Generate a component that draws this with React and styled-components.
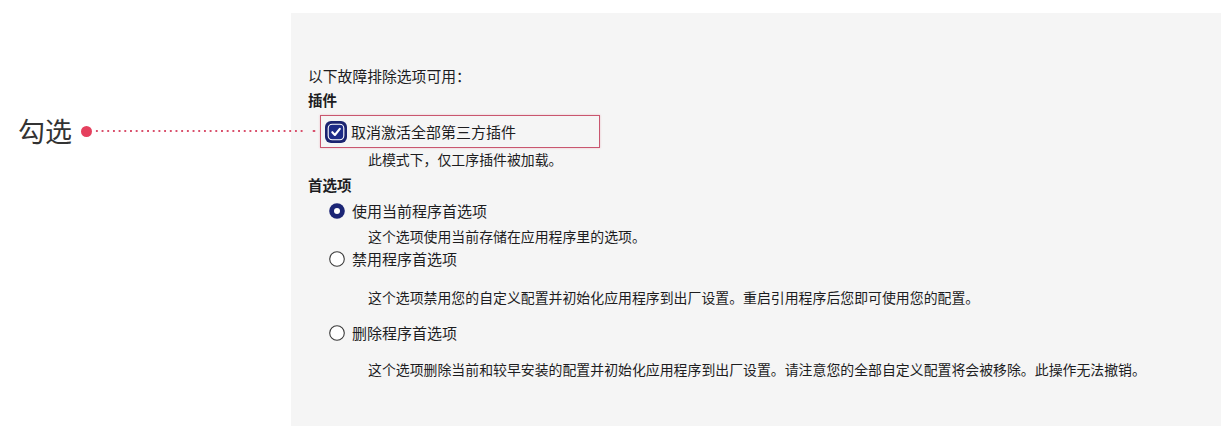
import React from "react";
import styled, { createGlobalStyle } from "styled-components";

const Global = createGlobalStyle`
  html, body { margin: 0; padding: 0; background: #ffffff; }
  body { font-family: "Noto Sans CJK SC", "Noto Sans", sans-serif; color: #1d1d1f; }
`;

const Page = styled.div`
  position: relative;
  width: 1232px;
  height: 433px;
  padding: 13px 0 0 291px;
  box-sizing: border-box;
`;

const Panel = styled.div`
  width: 930px;
  height: 413px;
  background: #f5f5f5;
  box-sizing: border-box;
  padding: 53px 0 0 17px;
  display: flex;
  flex-direction: column;
`;

const Intro = styled.div`
  font-size: 14.8px;
  line-height: 20px;
  height: 20px;
`;

const Heading = styled.div`
  font-size: 14.5px;
  font-weight: 700;
  line-height: 20px;
  height: 20px;
  margin-top: ${(p) => p.$mt}px;
`;

const CheckRow = styled.div`
  margin: 5px 0 0 12px;
  width: 280px;
  height: 33px;
  box-sizing: border-box;
  border: 1.5px solid #c9566f;
  box-shadow: 0 0 2px rgba(220, 80, 110, 0.35);
  display: flex;
  align-items: center;
  gap: 4px;
  padding-left: 4px;
`;

const Label = styled.span`
  font-size: 15px;
  line-height: 20px;
  color: #1d1d1f;
`;

const RadioRow = styled.div`
  display: flex;
  align-items: center;
  gap: 7px;
  height: 20px;
  margin: ${(p) => p.$mt}px 0 0 21px;
`;

const Desc = styled.div`
  font-size: 13.9px;
  line-height: 20px;
  height: 20px;
  margin: ${(p) => p.$mt}px 0 0 60px;
  white-space: nowrap;
`;

const Callout = styled.div`
  position: absolute;
  left: 18px;
  top: 114px;
  display: flex;
  align-items: center;
  height: 34px;
`;

const CalloutText = styled.span`
  font-size: 27px;
  line-height: 34px;
  color: #333333;
  font-weight: 400;
`;

const Dot = styled.span`
  width: 11px;
  height: 11px;
  border-radius: 50%;
  background: #e5405e;
  margin-left: 9px;
  flex: none;
`;

const Dotted = styled.span`
  width: ${(p) => p.$w}px;
  height: 2px;
  margin-left: ${(p) => p.$ml}px;
  background-image: radial-gradient(circle, #d9506c 0.95px, transparent 1.15px);
  background-size: 5.7px 2px;
  background-repeat: repeat-x;
  flex: none;
`;

function Checkbox() {
  return (
    <svg width="22" height="22" viewBox="0 0 22 22">
      <rect x="0" y="0" width="22" height="22" rx="6" fill="#1b2470" />
      <rect x="3.2" y="3.2" width="15.6" height="15.6" rx="4" fill="#1d2b86" stroke="#ffffff" strokeWidth="1.1" />
      <path d="M7.3 11.2 L9.9 14 L14.8 7.8" fill="none" stroke="#ffffff" strokeWidth="2.1" strokeLinecap="round" strokeLinejoin="round" />
    </svg>
  );
}

function Radio({ checked }) {
  return (
    <svg width="16" height="16" viewBox="0 0 16 16">
      {checked ? (
        <>
          <circle cx="8" cy="8" r="7.8" fill="#1b2575" />
          <circle cx="8" cy="8" r="3" fill="#ffffff" />
        </>
      ) : (
        <circle cx="8" cy="8" r="7.3" fill="#ffffff" stroke="#3a3a3a" strokeWidth="1.1" />
      )}
    </svg>
  );
}

const prefs = [
  { label: "使用当前程序首选项", desc: "这个选项使用当前存储在应用程序里的选项。", checked: true, rowMt: 6, descMt: 5 },
  { label: "禁用程序首选项", desc: "这个选项禁用您的自定义配置并初始化应用程序到出厂设置。重启引用程序后您即可使用您的配置。", checked: false, rowMt: 3, descMt: 18 },
  { label: "删除程序首选项", desc: "这个选项删除当前和较早安装的配置并初始化应用程序到出厂设置。请注意您的全部自定义配置将会被移除。此操作无法撤销。", checked: false, rowMt: 16, descMt: 16 },
];

export default function App() {
  return (
    <>
      <Global />
      <Page>
        <Panel>
          <Intro>以下故障排除选项可用：</Intro>
          <Heading $mt={4}>插件</Heading>
          <CheckRow>
            <Checkbox />
            <Label>取消激活全部第三方插件</Label>
          </CheckRow>
          <Desc $mt={1}>此模式下，仅工序插件被加载。</Desc>
          <Heading $mt={6}>首选项</Heading>
          {prefs.map((p) => (
            <React.Fragment key={p.label}>
              <RadioRow $mt={p.rowMt}>
                <Radio checked={p.checked} />
                <Label>{p.label}</Label>
              </RadioRow>
              <Desc $mt={p.descMt}>{p.desc}</Desc>
            </React.Fragment>
          ))}
        </Panel>
        <Callout>
          <CalloutText>勾选</CalloutText>
          <Dot />
          <Dotted $w={210} $ml={2} />
          <Dotted $w={6} $ml={7} />
        </Callout>
      </Page>
    </>
  );
}
